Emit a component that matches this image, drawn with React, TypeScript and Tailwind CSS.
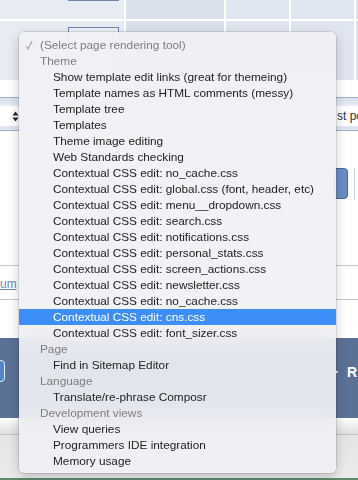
import React from 'react';

type Row = { label: string; kind: 'check' | 'head' | 'item'; active?: boolean };

const rows: Row[] = [
  { label: '(Select page rendering tool)', kind: 'check' },
  { label: 'Theme', kind: 'head' },
  { label: 'Show template edit links (great for themeing)', kind: 'item' },
  { label: 'Template names as HTML comments (messy)', kind: 'item' },
  { label: 'Template tree', kind: 'item' },
  { label: 'Templates', kind: 'item' },
  { label: 'Theme image editing', kind: 'item' },
  { label: 'Web Standards checking', kind: 'item' },
  { label: 'Contextual CSS edit: no_cache.css', kind: 'item' },
  { label: 'Contextual CSS edit: global.css (font, header, etc)', kind: 'item' },
  { label: 'Contextual CSS edit: menu__dropdown.css', kind: 'item' },
  { label: 'Contextual CSS edit: search.css', kind: 'item' },
  { label: 'Contextual CSS edit: notifications.css', kind: 'item' },
  { label: 'Contextual CSS edit: personal_stats.css', kind: 'item' },
  { label: 'Contextual CSS edit: screen_actions.css', kind: 'item' },
  { label: 'Contextual CSS edit: newsletter.css', kind: 'item' },
  { label: 'Contextual CSS edit: no_cache.css', kind: 'item' },
  { label: 'Contextual CSS edit: cns.css', kind: 'item', active: true },
  { label: 'Contextual CSS edit: font_sizer.css', kind: 'item' },
  { label: 'Page', kind: 'head' },
  { label: 'Find in Sitemap Editor', kind: 'item' },
  { label: 'Language', kind: 'head' },
  { label: 'Translate/re-phrase Composr', kind: 'item' },
  { label: 'Development views', kind: 'head' },
  { label: 'View queries', kind: 'item' },
  { label: 'Programmers IDE integration', kind: 'item' },
  { label: 'Memory usage', kind: 'item' },
];

// page content sitting behind the open select
function PageBehind() {
  return (
    <div className="flex flex-col h-full">
      {/* table header */}
      <div className="grid grid-cols-[124px_98px_63px_63px_1fr] grid-rows-[19px_59px] gap-[2px] bg-white h-[80px] shrink-0">
        <div className="bg-[#e7ebf2]">
          <div className="ml-[68px] w-[51px] h-[1px] bg-[#6f86ad]" />
        </div>
        <div className="bg-[#d9e0ec]" />
        <div className="bg-[#e0e6f0]" />
        <div className="bg-[#e0e6f0]" />
        <div className="bg-[#e0e6f0]" />
        <div className="bg-[#e7ebf2] pt-[6px]">
          <div className="ml-[68px] w-[51px] h-[40px] border border-[#6f86ad] bg-[#edf1f6]" />
        </div>
        <div className="bg-[#d9e0ec]" />
        <div className="bg-[#e0e6f0]" />
        <div className="bg-[#e0e6f0]" />
        <div className="bg-[#e0e6f0]" />
      </div>

      <div className="h-[17px] shrink-0" />

      {/* select row */}
      <div className="shrink-0 border-y border-[#9fb0cc]">
        <div className="h-[8px] bg-gradient-to-b from-[#d8e0ee] to-[#e8edf5]" />
        <div className="h-[20px] flex items-center bg-white overflow-hidden">
          <svg width="7" height="11" viewBox="0 0 7 11" className="ml-[12px] shrink-0">
            <path d="M3.5 0.5 L6.5 4.5 L0.5 4.5 Z" fill="#222" />
            <path d="M3.5 10.5 L6.5 6.5 L0.5 6.5 Z" fill="#222" />
          </svg>
          <span className="ml-[318px] text-[12px] text-[#333] whitespace-nowrap">st po</span>
        </div>
        <div className="h-[4px] bg-[#dfe6f1]" />
      </div>

      {/* white body with help button */}
      <div className="h-[134px] shrink-0 pt-[37px] flex">
        <div className="ml-[333px] w-[15px] h-[31px] rounded-[4px] bg-[#6a8cc6] border border-[#4c6592]" />
        <div className="ml-[6px] w-[4px] h-[31px] border-l border-[#c8cfd9]" />
      </div>

      {/* link row */}
      <div className="h-[35px] shrink-0 border-y border-[#bcc6d6] flex items-end pb-[8px]">
        <span className="text-[12px] leading-[14px] text-[#6a8bc0] underline">um</span>
      </div>

      <div className="h-[38px] shrink-0" />

      {/* dark footer band */}
      <div className="h-[80px] shrink-0 bg-[#5b7195] flex items-start pt-[22px]">
        <div className="-ml-[10px] w-[15px] h-[22px] rounded-[4px] border border-[#dfe7f3] bg-[#5585c9]" />
        <span className="ml-auto mr-[1px] mt-[2px] text-[14px] font-bold text-white whitespace-nowrap">
          ·&nbsp; R
        </span>
      </div>

      <div className="h-[17px] shrink-0 bg-gradient-to-b from-white to-[#dedede] border-b border-[#c4c4c4]" />
      <div className="flex-1 bg-gradient-to-b from-[#e4e4e4] to-[#ececec]" />
      <div className="h-[2px] shrink-0 bg-[#5d8a6d]" />
    </div>
  );
}

function CheckMark() {
  return (
    <svg width="8" height="10" viewBox="0 0 8 10" className="absolute left-[6px] top-[3px]">
      <path d="M1 6 L3 9 L7 1" fill="none" stroke="#a8a8a8" strokeWidth="1.2" />
    </svg>
  );
}

function RenderMenu() {
  return (
    <div className="absolute left-[19px] top-[32px] w-[317px] h-[441px] rounded-[5px] pt-[5px] pb-[4px] bg-[rgba(240,241,244,0.91)] backdrop-blur-md shadow-[0_0_0_0.5px_rgba(0,0,0,0.2),0_4px_12px_rgba(0,0,0,0.2)] overflow-hidden">
      {rows.map((r, i) => (
        <div
          key={i}
          className={`relative h-[16px] leading-[16px] text-[11.8px] whitespace-nowrap ${
            r.kind === 'item' ? 'pl-[34px]' : 'pl-[21px]'
          } ${
            r.active
              ? 'bg-[#3d8ef6] text-white'
              : r.kind === 'item'
              ? 'text-[#222]'
              : 'text-[#7d7d7d]'
          }`}
        >
          {r.kind === 'check' && <CheckMark />}
          {r.label}
        </div>
      ))}
    </div>
  );
}

export default function App() {
  return (
    <div className="relative w-[358px] h-[480px] overflow-hidden bg-white font-['Liberation_Sans',Arial,sans-serif]">
      <PageBehind />
      <RenderMenu />
    </div>
  );
}
